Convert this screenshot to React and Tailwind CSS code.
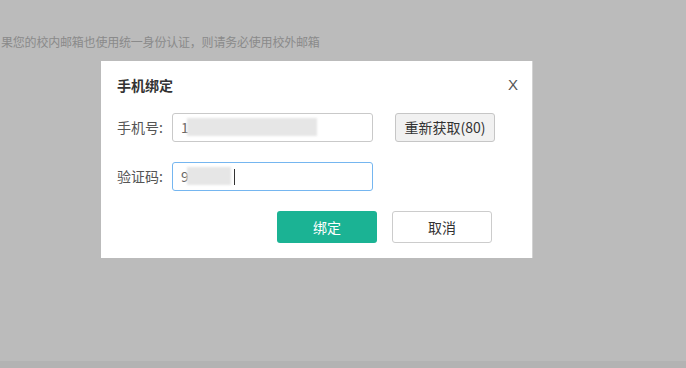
import React from 'react';

function BlurField({ lead, width, focused, tail }) {
  return (
    <div className={`w-[201px] h-[29px] rounded-[3px] bg-white flex items-center pl-[8px] border ${focused ? 'border-[#75b6f0]' : 'border-[#c9c9c9]'}`}>
      <span className="relative text-[14px] text-[#666] tracking-[1px]">
        {lead}
        <span className={`absolute left-[6px] top-[1px] h-[18px] bg-[#e6e6e6] blur-[1px] ${width}`}></span>
      </span>
      {tail && <span className="ml-[44px] w-px h-[16px] bg-[#333]"></span>}
    </div>
  );
}

export default function App() {
  return (
    <div className="w-[686px] h-[368px] bg-[#bbbbbb] flex flex-col overflow-hidden font-['Noto_Sans_CJK_SC','Noto_Sans',sans-serif]">
      <div className="h-[361px] flex flex-col">
        <p className="mt-[33px] ml-[1px] text-[12px] tracking-[-0.2px] leading-[18px] text-[#8a8a8a] whitespace-nowrap">
          果您的校内邮箱也使用统一身份认证，则请务必使用校外邮箱
        </p>
        <div className="mt-[10px] ml-[101px] w-[432px] h-[197px] bg-white border-r border-[#d2d2d2] flex flex-col">
          <div className="flex justify-between items-center pl-[16px] pr-[14px] pt-[14px]">
            <h2 className="text-[14px] font-bold text-[#333] leading-[20px]">手机绑定</h2>
            <span className="text-[15px] text-[#555] font-['Liberation_Sans',sans-serif] leading-[20px]">X</span>
          </div>
          <div className="flex items-center mt-[18px] pl-[16px]">
            <span className="w-[55px] text-[14px] text-[#555]">手机号:</span>
            <BlurField lead="1" width="w-[130px]" />
            <button className="ml-[22px] w-[100px] h-[29px] rounded-[3px] bg-[#f1f1f1] border border-[#c6c6c6] text-[14px] text-[#333] font-['Noto_Sans_CJK_SC',sans-serif]">
              重新获取(80)
            </button>
          </div>
          <div className="flex items-center mt-[20px] pl-[16px]">
            <span className="w-[55px] text-[14px] text-[#555]">验证码:</span>
            <BlurField lead="9" width="w-[44px]" focused tail />
          </div>
          <div className="flex mt-[20px] pl-[176px] gap-[15px]">
            <button className="w-[100px] h-[32px] rounded-[3px] bg-[#1bb394] text-white text-[14px]">绑定</button>
            <button className="w-[100px] h-[32px] rounded-[3px] bg-white border border-[#cccccc] text-[#333] text-[14px]">取消</button>
          </div>
        </div>
      </div>
      <div className="flex-1 bg-[#b3b3b3]"></div>
    </div>
  );
}
